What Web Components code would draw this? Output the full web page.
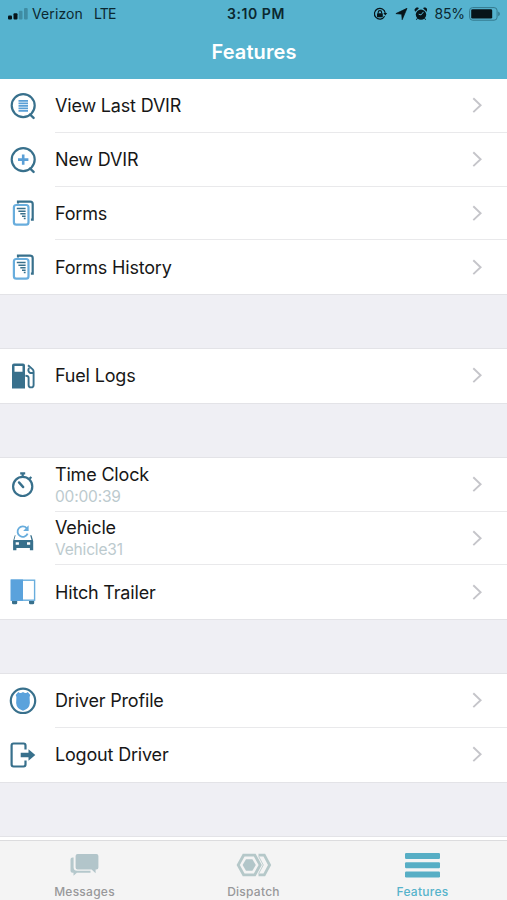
<!DOCTYPE html>
<html lang="en">
<head>
<meta charset="UTF-8">
<title>Features</title>
<style>
  body {
    margin: 0;
    font-family: Inter, "Liberation Sans", sans-serif;
    background: #efeff4;
    color: #171717;
  }
</style>
</head>
<body>
<app-screen>
  <status-bar slot="top" carrier="Verizon" network="LTE" time="3:10 PM" battery="85%"></status-bar>
  <nav-header slot="top">Features</nav-header>

  <menu-group>
    <menu-row icon="view">View Last DVIR</menu-row>
    <menu-row icon="add">New DVIR</menu-row>
    <menu-row icon="forms">Forms</menu-row>
    <menu-row icon="forms">Forms History</menu-row>
  </menu-group>
  <menu-group>
    <menu-row icon="fuel">Fuel Logs</menu-row>
  </menu-group>
  <menu-group>
    <menu-row icon="timer">Time Clock<span slot="detail">00:00:39</span></menu-row>
    <menu-row icon="vehicle">Vehicle<span slot="detail">Vehicle31</span></menu-row>
    <menu-row icon="trailer">Hitch Trailer</menu-row>
  </menu-group>
  <menu-group>
    <menu-row icon="profile">Driver Profile</menu-row>
    <menu-row icon="logout">Logout Driver</menu-row>
  </menu-group>
  <menu-group></menu-group>

  <tab-bar slot="bottom">
    <tab-item icon="messages">Messages</tab-item>
    <tab-item icon="dispatch">Dispatch</tab-item>
    <tab-item icon="menu" active>Features</tab-item>
  </tab-bar>
</app-screen>

<script>
const ROW_ICONS = {
  view: `
    <circle cx="15.2" cy="14.6" r="11.5" fill="none" stroke="#38708c" stroke-width="2.2"/>
    <path d="M22 23.5l3.6 3.4" stroke="#38708c" stroke-width="2.4" stroke-linecap="round"/>
    <path d="M10.500 9.800h9.500M10.500 12.300h9.500M10.500 14.800h9.500M10.500 17.300h9.500M10.500 19.800h9.500" stroke="#5a9fd6" stroke-width="1.700"/>`,
  add: `
    <circle cx="15.2" cy="14.6" r="11.5" fill="none" stroke="#38708c" stroke-width="2.2"/>
    <path d="M22 23.5l3.6 3.4" stroke="#38708c" stroke-width="2.4" stroke-linecap="round"/>
    <path d="M10 14.6h10.4M15.2 9.400v10.400" stroke="#5a9fd6" stroke-width="2.6"/>`,
  forms: `
    <path d="M10 5.6V3.6h12.200q2.500 0 2.500 2.500v15.500h-1.800" fill="none" stroke="#38708c" stroke-width="2.2"/>
    <rect x="5.9" y="7" width="14.6" height="19.6" rx="2.4" fill="#fff" stroke="#68addd" stroke-width="2.2"/>
    <path d="M8.8 10.6h8.8M10.4 13.2h7.2M12.3 15.8h5.3M14 18.3h3.6M15.8 20.5h1.8" stroke="#38708c" stroke-width="1.5"/>`,
  fuel: `
    <path fill-rule="evenodd" d="M6 2.600h9q2 0 2 2v22.800H4V4.600q0-2 2-2zM6.500 5v5.800h8V5z" fill="#38708c"/>
    <path d="M20 4.200l4.700 4.200q.9.900.9 2.300v13.200q0 2.500-2.500 2.500t-2.500-2.500v-7.200q0-2-3.200-2" fill="none" stroke="#38708c" stroke-width="1.900"/>
    <path d="M21 6.800q-1.700 4 1.300 5.200h3" fill="none" stroke="#38708c" stroke-width="1.900"/>`,
  timer: `
    <circle cx="14.7" cy="16.4" r="9.600" fill="none" stroke="#38708c" stroke-width="2.2"/>
    <path d="M12.200 3.400h5M14.700 3.400v4M21.600 8.600l1.800-1.600" stroke="#38708c" stroke-width="2.2"/>
    <path d="M11 12.400l4.200 4.700" stroke="#38708c" stroke-width="2.4" stroke-linecap="round"/>`,
  vehicle: `
    <path d="M18.700 5.200A5.200 5.200 0 1 0 19.600 10.600" fill="none" stroke="#68addd" stroke-width="1.8"/>
    <path d="M20.600 2.300v5.700h-5.400z" fill="#68addd"/>
    <path fill-rule="evenodd" d="M7.600 12.200L6.300 17.100h17.200l-1.300-4.900h1.300l1.700 5.700v9.300h-3.300v-2.200H8.400v2.200H5.100v-9.300l1.700-5.700zM7.700 19.300v2.500h3.200v-2.500zM19 19.300v2.500h3.200v-2.500z" fill="#38708c"/>`,
  trailer: `
    <rect x="3.4" y="3.2" width="23.2" height="20" fill="#fff" stroke="#68addd" stroke-width="1.4"/>
    <path d="M2.700 2.500H15v21.400H2.700z" fill="#5aa2dc"/>
    <path d="M4 23.900h5.200v2q0 1.400-1.400 1.400H5.400Q4 27.300 4 25.900zM21 23.900h5.200v2q0 1.400-1.400 1.400h-2.400q-1.400 0-1.400-1.400z" fill="#38708c"/>`,
  profile: `
    <circle cx="15" cy="14.8" r="12.2" fill="none" stroke="#38708c" stroke-width="2.2"/>
    <path d="M11.800 6.900q1.700.3 3.200-1 1.500 1.300 3.200 1l1.500-.8 2.600 2.900q-1.200 2-.6 4.400 1 7.300-3.600 9.800l-3.100 1.500-3.100-1.500q-4.600-2.500-3.600-9.800.6-2.400-.6-4.400l2.600-2.900z" fill="#5aa2dc"/>`,
  logout: `
    <path d="M17.500 9.500V5.400q0-1.900-1.900-1.900H5.500q-1.900 0-1.900 1.900v19.200q0 1.900 1.900 1.900h10.100q1.900 0 1.900-1.900v-4.100" fill="none" stroke="#38708c" stroke-width="2.2"/>
    <path d="M12.700 12.800H20.500V9.200l6.800 5.800-6.800 5.800v-3.600h-7.800z" fill="#38708c"/>`
};

const TAB_ICONS = {
  messages: `
    <path d="M4.600 6.500H3.500Q1.500 6.500 1.500 8.500V19.800q0 2 2 2h1v3l3.400-3h13.600v-2H8.100q-3.500 0-3.500-3.500z" fill="#b5c8cc"/>
    <path d="M8.600 3H27.400Q29.400 3 29.400 5V16.600q0 2-2 2h-.8v3.600l-4-3.600H8.600q-2 0-2-2V5q0-2 2-2z" fill="#b2c5ca"/>`,
  dispatch: `
    <path d="M5.600 4.200h11.200l5.400 9.800-5.400 9.800H5.600L.2 14z" fill="none" stroke="#b5c8c9" stroke-width="2.800"/>
    <path d="M8 8.300h6.400l3.400 5.700-3.400 5.700H8L4.600 14z" fill="#b2c6c9"/>
    <path d="M20.500 4.200h5.800l5.300 9.800-5.300 9.800h-5.800" fill="none" stroke="#b5c8c9" stroke-width="2.800"/>
    <path d="M20.700 5.500l4.600 8.500-4.600 8.500" fill="none" stroke="#c0d0d1" stroke-width="1"/>`,
  menu: `
    <rect x="-2" y="1.900" width="35" height="6" rx="1.2" fill="#57aec5"/>
    <rect x="-2" y="11.200" width="35" height="6" rx="1.2" fill="#57aec5"/>
    <rect x="-2" y="20.500" width="35" height="6" rx="1.2" fill="#57aec5"/>`
};

class AppScreen extends HTMLElement {
  constructor() {
    super();
    this.attachShadow({ mode: 'open' });
    this.shadowRoot.innerHTML = `
      <style>
        :host {
          display: flex;
          flex-direction: column;
          height: 900px;
          overflow: hidden;
        }

        header {
          flex: none;
          background: #56b3cf;
        }

        main {
          flex: 1;
          min-height: 0;
          overflow: hidden;
          display: flex;
          flex-direction: column;
          gap: 55px;
        }
      </style>
      <header><slot name="top"></slot></header>
      <main><slot></slot></main>
      <slot name="bottom"></slot>
    `;
  }
}

class StatusBar extends HTMLElement {
  constructor() {
    super();
    this.attachShadow({ mode: 'open' });
  }

  connectedCallback() {
    this.shadowRoot.innerHTML = `
      <style>
        :host {
          display: grid;
          grid-template-columns: 1fr auto 1fr;
          align-items: center;
          height: 28px;
          box-sizing: border-box;
          padding: 0 7px 1px 8px;
          font-size: 14px;
          color: #0b2830;
        }

        .left, .right {
          display: flex;
          align-items: center;
        }

        .right {
          justify-content: flex-end;
        }

        .network {
          margin-left: 11px;
          letter-spacing: -0.7px;
        }

        .carrier {
          margin-left: 4px;
          letter-spacing: 0.1px;
        }

        .time {
          padding-left: 4px;
          font-weight: 600;
          letter-spacing: 0.55px;
        }

        .battery {
          margin: 0 4px 0 7px;
          letter-spacing: -0.1px;
        }

        svg {
          display: block;
        }
      </style>
      <div class="left">
        <svg width="20" height="12" viewBox="0 0 20 12">
          <rect x="0" y="7.5" width="4" height="4" rx="1" fill="#071419"/>
          <rect x="5.5" y="5.2" width="4" height="6.3" rx="1" fill="#071419"/>
          <rect x="10.8" y="2.7" width="3.7" height="8.8" rx="1" fill="#3f8ca3"/>
          <rect x="16" y="0" width="3.7" height="11.5" rx="1" fill="#3f8ca3"/>
        </svg>
        <span class="carrier">${this.getAttribute('carrier')}</span>
        <span class="network">${this.getAttribute('network')}</span>
      </div>
      <span class="time">${this.getAttribute('time')}</span>
      <div class="right">
        <svg width="54" height="14" viewBox="0 0 54 14" fill="#071419">
          <path d="M11.600 9.300A5.400 5.400 0 1 1 12.200 6" fill="none" stroke="#071419" stroke-width="1.2"/>
          <path d="M10.300 6h3.900l-1.900 2.600z"/>
          <rect x="4" y="6.2" width="5.8" height="4" rx=".6"/>
          <path d="M5.200 6.500V5.300a1.700 1.700 0 0 1 3.400 0v1.200" fill="none" stroke="#071419" stroke-width="1.1"/>
          <path d="M34 1.300L29.200 12.700 28.700 7.200 22.900 6.600z" stroke="#071419" stroke-width=".7" stroke-linejoin="round"/>
          <circle cx="48" cy="7.6" r="5.2"/>
          <path d="M42.300 4.200a2.200 2.200 0 0 1 3.200-2.900zM53.700 4.200a2.200 2.200 0 0 0-3.200-2.900zM44.500 11l-1.200 2M51.500 11l1.200 2" stroke="#071419" stroke-width=".8"/>
          <path d="M48 7.900l2.500-3M48 7.900l-2.300-.7" fill="none" stroke="#56b3cf" stroke-width="1"/>
        </svg>
        <span class="battery">${this.getAttribute('battery')}</span>
        <svg width="31" height="14" viewBox="0 0 31 14">
          <rect x=".6" y=".6" width="27.5" height="12.6" rx="3" fill="none" stroke="#34798d" stroke-width="1"/>
          <rect x="2.2" y="2.2" width="21" height="9.4" rx="1.3" fill="#071419"/>
          <path d="M29.200 4.600q1.700.8 1.700 2.300t-1.700 2.300z" fill="#34798d"/>
        </svg>
      </div>
    `;
  }
}

class NavHeader extends HTMLElement {
  constructor() {
    super();
    this.attachShadow({ mode: 'open' });
    this.shadowRoot.innerHTML = `
      <style>
        :host {
          display: flex;
          align-items: center;
          justify-content: center;
          height: 51px;
          box-sizing: border-box;
          padding: 0 0 3px 1px;
          font-size: 20px;
          font-weight: 600;
          letter-spacing: 0.1px;
          color: #fff;
        }
      </style>
      <slot></slot>
    `;
  }
}

class MenuGroup extends HTMLElement {
  constructor() {
    super();
    this.attachShadow({ mode: 'open' });
    this.shadowRoot.innerHTML = `
      <style>
        :host {
          display: block;
          flex: none;
          min-height: 4px;
          background: #fff;
          box-shadow: 0 0 0 1px #e3e3e7;
        }

        ::slotted(menu-row:not(:last-child)) {
          --line: #e9e9eb;
        }
      </style>
      <slot></slot>
    `;
  }
}

class MenuRow extends HTMLElement {
  constructor() {
    super();
    this.attachShadow({ mode: 'open' });
  }

  connectedCallback() {
    this.shadowRoot.innerHTML = `
      <style>
        :host {
          display: flex;
          height: 53.75px;
          padding-left: 8px;
        }

        .icon {
          flex: none;
          align-self: center;
          width: 30px;
          height: 30px;
          margin-right: 17px;
        }

        .content {
          flex: 1;
          display: flex;
          align-items: center;
          justify-content: space-between;
          padding-right: 24px;
          border-bottom: 1px solid var(--line, transparent);
        }

        .label {
          display: flex;
          flex-direction: column;
          padding-top: 2px;
          font-size: 18px;
          line-height: 22px;
          letter-spacing: -0.18px;
        }

        ::slotted([slot="detail"]) {
          font-size: 15.5px;
          line-height: 21px;
          color: #bccace;
        }

        .chevron {
          width: 12px;
          height: 18px;
        }
      </style>
      <svg class="icon" viewBox="0 0 30 30">${ROW_ICONS[this.getAttribute('icon')]}</svg>
      <div class="content">
        <div class="label"><div><slot></slot></div><slot name="detail"></slot></div>
        <svg class="chevron" viewBox="0 0 12 18">
          <path d="M2.300 2.300L9.600 9.200 2.300 16.100" fill="none" stroke="#c5c5ca" stroke-width="1.9"/>
        </svg>
      </div>
    `;
  }
}

class TabBar extends HTMLElement {
  constructor() {
    super();
    this.attachShadow({ mode: 'open' });
    this.shadowRoot.innerHTML = `
      <style>
        :host {
          display: grid;
          grid-template-columns: repeat(3, 1fr);
          flex: none;
          box-sizing: border-box;
          height: 60px;
          background: #f4f4f4;
          border-top: 1px solid #dcdcde;
        }
      </style>
      <slot></slot>
    `;
  }
}

class TabItem extends HTMLElement {
  constructor() {
    super();
    this.attachShadow({ mode: 'open' });
  }

  connectedCallback() {
    this.shadowRoot.innerHTML = `
      <style>
        :host {
          display: flex;
          flex-direction: column;
          align-items: center;
          padding-top: 10px;
          font-size: 12px;
          font-weight: 500;
          line-height: 16px;
          letter-spacing: 0.25px;
          color: #98989a;
        }

        :host([active]) {
          color: #56b3cb;
        }

        svg {
          width: 31px;
          height: 28px;
          margin-bottom: 5px;
          overflow: visible;
        }
      </style>
      <svg viewBox="0 0 31 28">${TAB_ICONS[this.getAttribute('icon')]}</svg>
      <span><slot></slot></span>
    `;
  }
}

customElements.define('app-screen', AppScreen);
customElements.define('status-bar', StatusBar);
customElements.define('nav-header', NavHeader);
customElements.define('menu-group', MenuGroup);
customElements.define('menu-row', MenuRow);
customElements.define('tab-bar', TabBar);
customElements.define('tab-item', TabItem);
</script>
</body>
</html>
